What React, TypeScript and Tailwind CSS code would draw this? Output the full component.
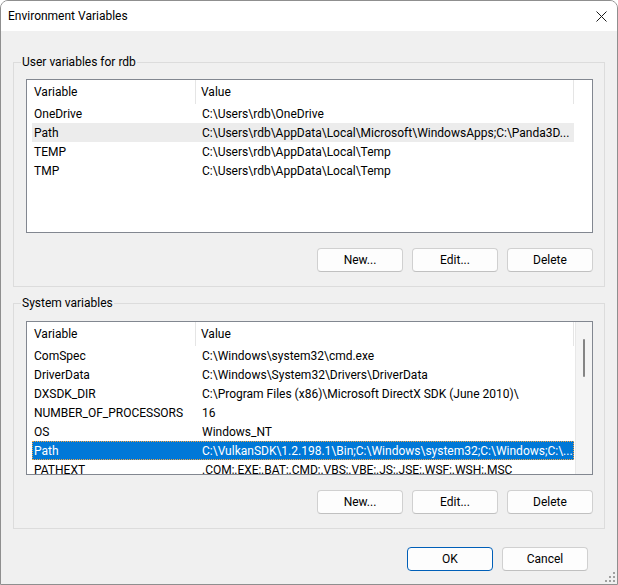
import React from "react";

type Row = { name: string; value: string; state?: "hover" | "selected" };

const userRows: Row[] = [
  { name: "OneDrive", value: "C:\\Users\\rdb\\OneDrive" },
  { name: "Path", value: "C:\\Users\\rdb\\AppData\\Local\\Microsoft\\WindowsApps;C:\\Panda3D...", state: "hover" },
  { name: "TEMP", value: "C:\\Users\\rdb\\AppData\\Local\\Temp" },
  { name: "TMP", value: "C:\\Users\\rdb\\AppData\\Local\\Temp" },
];

const systemRows: Row[] = [
  { name: "ComSpec", value: "C:\\Windows\\system32\\cmd.exe" },
  { name: "DriverData", value: "C:\\Windows\\System32\\Drivers\\DriverData" },
  { name: "DXSDK_DIR", value: "C:\\Program Files (x86)\\Microsoft DirectX SDK (June 2010)\\" },
  { name: "NUMBER_OF_PROCESSORS", value: "16" },
  { name: "OS", value: "Windows_NT" },
  { name: "Path", value: "C:\\VulkanSDK\\1.2.198.1\\Bin;C:\\Windows\\system32;C:\\Windows;C:\\...", state: "selected" },
  { name: "PATHEXT", value: ".COM;.EXE;.BAT;.CMD;.VBS;.VBE;.JS;.JSE;.WSF;.WSH;.MSC" },
];

function ListView({ rows, scroll }: { rows: Row[]; scroll?: boolean }) {
  return (
    <div className="h-[154px] border border-[#828790] bg-white flex overflow-hidden">
      <div className="flex-1 min-w-0 pl-[5px] flex flex-col">
        <div className="h-[24px] flex shrink-0 w-[542px]">
          <div className="w-[164px] shrink-0 pl-[2px] flex items-center border-r border-[#e5e5e5]">Variable</div>
          <div className="flex-1 pl-[5px] flex items-center border-r border-[#e5e5e5]">Value</div>
        </div>
        {rows.map((r) => {
          const cls =
            r.state === "selected"
              ? "bg-[#0078d7] text-white outline outline-1 outline-dotted outline-[#f5a442] -outline-offset-1"
              : r.state === "hover"
              ? "bg-[#ececec]"
              : "";
          return (
            <div key={r.name} className={`h-[19px] shrink-0 w-[542px] flex items-center whitespace-nowrap ${cls}`}>
              <div className="w-[170px] shrink-0 pl-[2px] overflow-hidden">{r.name}</div>
              <div className="flex-1 overflow-hidden">{r.value}</div>
            </div>
          );
        })}
      </div>
      {scroll && (
        <div className="w-[17px] shrink-0 bg-[#f4f4f4] border-l border-[#e8e8e8] pt-[17px] flex justify-center">
          <div className="w-[2px] h-[38px] rounded-full bg-[#858585]" />
        </div>
      )}
    </div>
  );
}

function Btn({ children, primary }: { children: React.ReactNode; primary?: boolean }) {
  return (
    <div
      className={`w-[86px] h-[24px] rounded-[4px] flex items-center justify-center bg-[#fdfdfd] border ${
        primary ? "border-[#005fb8]" : "border-[#d0d0d0] border-b-[#c0c0c0]"
      }`}
    >
      {children}
    </div>
  );
}

function Group({
  label,
  rows,
  scroll,
  className,
  pt,
}: {
  label: string;
  rows: Row[];
  scroll?: boolean;
  className?: string;
  pt: string;
}) {
  return (
    <fieldset className={`mx-[12px] border border-[#dcdcdc] px-0 pt-0 pb-[14px] ${className ?? ""}`}>
      <legend className="ml-[7px] px-[1px] h-[16px] leading-[16px]">{label}</legend>
      <div className={`pl-[12px] pr-[11px] ${pt}`}>
        <ListView rows={rows} scroll={scroll} />
        <div className="mt-[15px] flex justify-end gap-[9px]">
          <Btn>New...</Btn>
          <Btn>Edit...</Btn>
          <Btn>Delete</Btn>
        </div>
      </div>
    </fieldset>
  );
}

export default function App() {
  return (
    <div
      className="w-[618px] h-[585px] bg-[#f0f0f0] border border-[#8f8f8f] rounded-t-[8px] overflow-hidden flex flex-col text-[12px] text-black relative"
      style={{ fontFamily: "Roboto, 'Noto Sans', sans-serif" }}
    >
      <div className="h-[30px] shrink-0 bg-white flex items-center justify-between pl-[7px] pr-[10px]">
        <span>Environment Variables</span>
        <svg width="11" height="11" viewBox="0 0 11 11">
          <path d="M0.5 0.5 L10.5 10.5 M10.5 0.5 L0.5 10.5" stroke="#1a1a1a" strokeWidth="1" fill="none" />
        </svg>
      </div>
      <Group label="User variables for rdb" rows={userRows} className="mt-[23px]" pt="pt-[9px]" />
      <Group label="System variables" rows={systemRows} scroll className="mt-[8px]" pt="pt-[10px]" />
      <div className="mt-[18px] flex justify-end gap-[9px] pr-[29px]">
        <Btn primary>OK</Btn>
        <Btn>Cancel</Btn>
      </div>
      <svg width="10" height="10" viewBox="0 0 10 10" className="absolute right-[2px] bottom-[2px]">
        {[
          [8, 0],
          [8, 4],
          [4, 4],
          [8, 8],
          [4, 8],
          [0, 8],
        ].map(([x, y], i) => (
          <rect key={i} x={x} y={y} width="2" height="2" fill="#a0a0a0" />
        ))}
      </svg>
    </div>
  );
}
